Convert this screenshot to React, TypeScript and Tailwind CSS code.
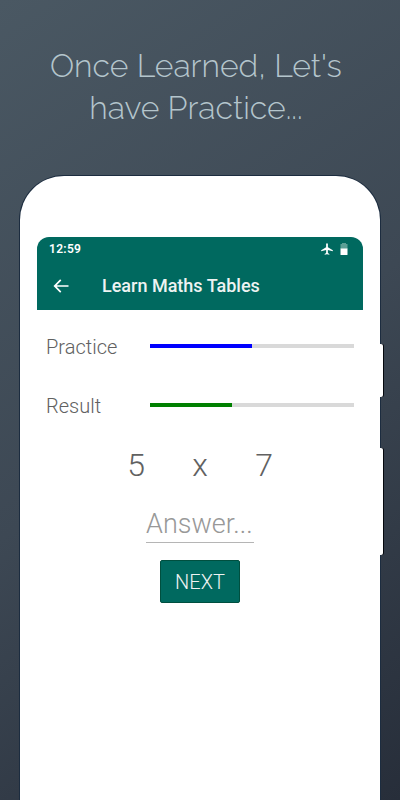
import React, { useState } from 'react';

const operands = [
  { id: 'left', text: '5' },
  { id: 'sign', text: 'x' },
  { id: 'right', text: '7' }
];

const StatusBar: React.FC = () => (
  <div className="flex h-6 items-center justify-between pl-3 pr-[15px]">
    <span className="text-xs font-semibold tracking-wide">12:59</span>
    <div className="flex items-center gap-1.5">
      {/* Airplane mode */}
      <svg className="h-3.5 w-3.5" viewBox="0 0 24 24" fill="currentColor" aria-hidden="true">
        <path d="M22 16v-2l-8.500-5V3.500C13.500 2.670 12.830 2 12 2s-1.500.67-1.500 1.500V9L2 14v2l8.500-2.500V19L8 20.500V22l4-1 4 1v-1.500L13.500 19v-5.500L22 16z" />
      </svg>
      {/* Battery */}
      <svg className="h-3.5 w-2" viewBox="0 0 8 14" aria-hidden="true">
        <path d="M2 1h4v1h1.500v5h-7V2H2z" fill="#5a9f95" />
        <path d="M.5 6.500h7v6a.5.5 0 0 1-.5.5H1a.5.5 0 0 1-.5-.5z" fill="#ffffff" />
      </svg>
    </div>
  </div>
);

const App: React.FC = () => {
  const [answer, setAnswer] = useState('');

  return (
    <div className="flex min-h-screen flex-col bg-linear-145 from-[#4a5863] via-[#3d4854] to-[#272e3a] font-['Roboto',sans-serif]">
      <h1 className="pl-8 pr-10 pt-[45px] text-center font-['Raleway','Lato',sans-serif] text-[32px] font-light leading-[42px] text-[#b4c5cc]">
        Once Learned, Let's
        <br />
        have Practice...
      </h1>

      {/* Phone */}
      <div className="relative mx-5 mt-[47px] flex flex-1 flex-col rounded-t-[44px] bg-white px-[17px] pt-[61px] shadow-[0_0_0_1px_#1c2c3f]">
        {/* Side keys */}
        <div className="absolute -right-[3px] top-[168px] h-[53px] w-[3px] rounded-r-xs bg-white shadow-[1px_0_0_#05080d]" />
        <div className="absolute -right-[3px] top-[272px] h-[107px] w-[3px] rounded-r-xs bg-white shadow-[1px_0_0_#05080d]" />

        <header className="rounded-t-xl bg-[#00695f] text-white">
          <StatusBar />
          <div className="flex h-[49px] items-center gap-8 pl-[15px]">
            <button type="button" aria-label="Back" className="flex h-[18px] w-[18px] items-center justify-center">
              <svg className="h-5 w-5 shrink-0" viewBox="0 0 24 24" fill="currentColor" aria-hidden="true">
                <path d="M21 11H6.830l5.590-5.590L11 4l-8 8 8 8 1.410-1.410L6.830 13H21z" />
              </svg>
            </button>
            <h2 className="text-lg font-medium text-[#eef3f2]">Learn Maths Tables</h2>
          </div>
        </header>

        <main className="flex flex-col px-[9px] pt-[21px] font-light text-[#616161]">
          <div className="flex h-[30px] items-center">
            <label htmlFor="practice" className="w-[104px] shrink-0 pt-0.5 text-xl">Practice</label>
            <progress
              id="practice"
              value={50}
              max={100}
              className="h-1 min-w-0 flex-1 appearance-none [&::-webkit-progress-bar]:bg-[#d9d9d9] [&::-webkit-progress-value]:bg-[#0000ff]"
            />
          </div>
          <div className="mt-[29px] flex h-[30px] items-center">
            <label htmlFor="result" className="w-[104px] shrink-0 pt-0.5 text-xl">Result</label>
            <progress
              id="result"
              value={40}
              max={100}
              className="h-1 min-w-0 flex-1 appearance-none [&::-webkit-progress-bar]:bg-[#d9d9d9] [&::-webkit-progress-value]:bg-[#008000]"
            />
          </div>

          {/* Question */}
          <div className="mt-[25px] flex justify-center text-[32px] leading-10">
            {operands.map((item) => (
              <span key={item.id} className="w-16 text-center">{item.text}</span>
            ))}
          </div>

          <input
            type="text"
            aria-label="Answer"
            placeholder="Answer..."
            value={answer}
            onChange={(e) => setAnswer(e.target.value)}
            className="mx-auto mt-5 h-[38px] w-[108px] border-b border-[#b5b5b5] bg-transparent pt-0.5 text-[27px] font-light outline-none placeholder:text-[#989898]"
          />

          <button
            type="button"
            className="mx-auto mt-[17px] h-[43px] w-20 rounded-xs border border-[#004f3f] bg-[#00695f] text-xl font-light text-[#eef3f2]"
          >
            NEXT
          </button>
        </main>
      </div>
    </div>
  );
};

export default App;
